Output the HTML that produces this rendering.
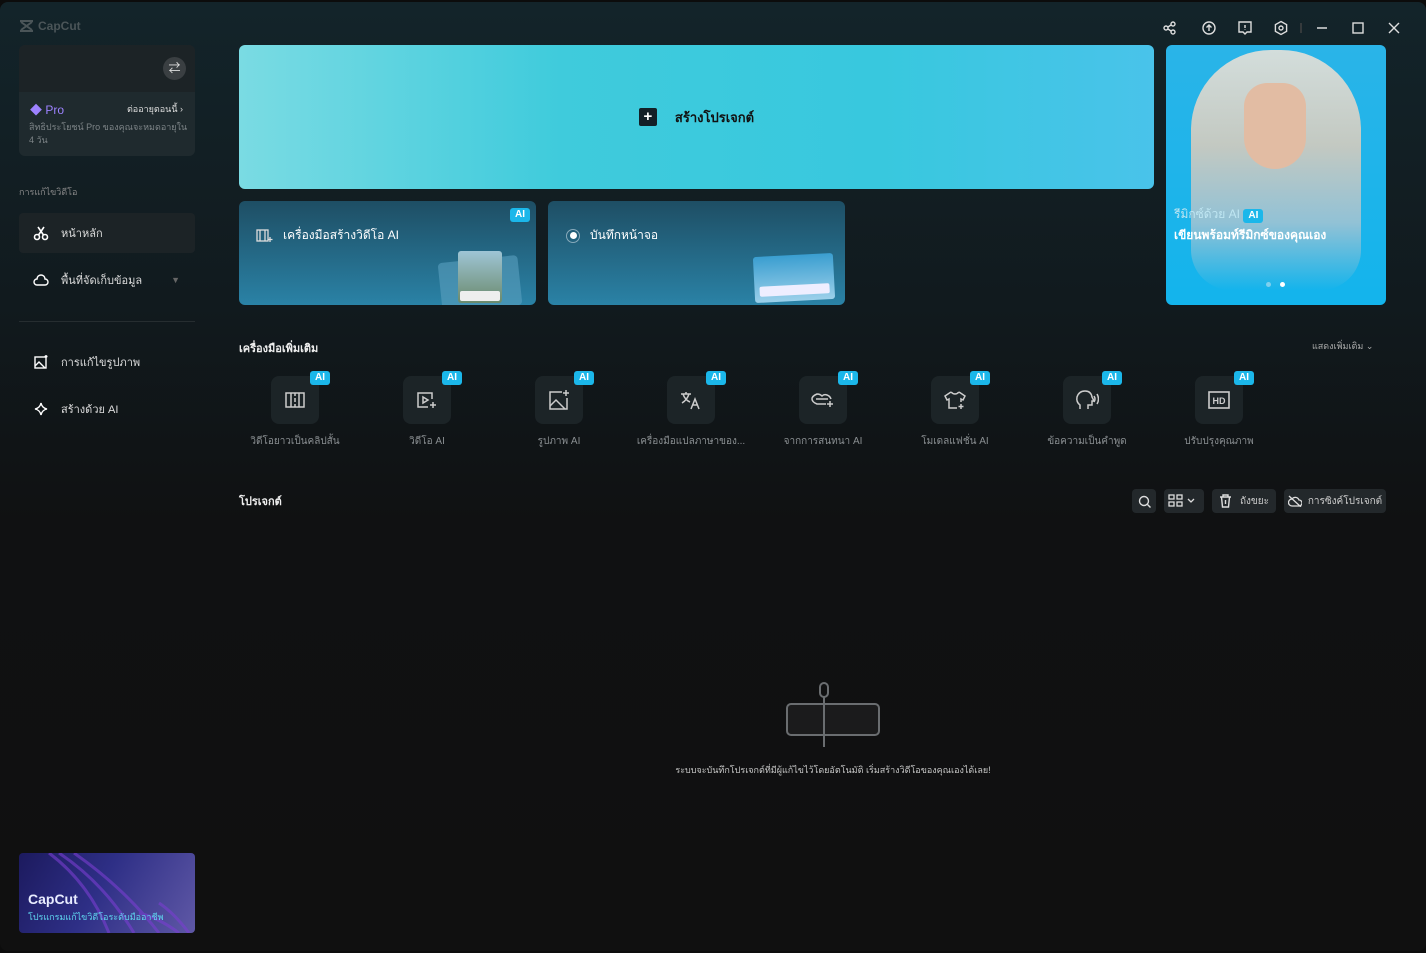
<!DOCTYPE html>
<html><head><meta charset="utf-8"><style>
*{margin:0;padding:0;box-sizing:border-box}
body{width:1426px;height:953px;background:#0c0c0c;font-family:"Liberation Sans","Noto Sans CJK SC",sans-serif;color:#ddd;overflow:hidden;position:relative}
.win{position:absolute;left:0;top:2px;width:1426px;height:949px;border-radius:8px;background:linear-gradient(180deg,#13242a 0px,#111a1e 300px,#101112 520px,#101010 100%);overflow:hidden}
.abs{position:absolute}
.ai{position:absolute;background:#1bb7ea;color:#fff;font-size:10px;font-weight:bold;border-radius:3px;padding:1px 5px;line-height:12px}
.tool{position:absolute;top:374px;width:120px;text-align:center}
.tool .box{width:48px;height:48px;border-radius:8px;background:#1c2427;margin:0 auto;position:relative;display:flex;align-items:center;justify-content:center}
.tool .lbl{font-size:10px;color:#8a8f92;margin-top:10px;white-space:nowrap}
.nav{position:absolute;left:19px;width:176px;height:40px;display:flex;align-items:center;font-size:11px;color:#ddd}
.nav svg{margin:0 12px 0 14px}
.btn{position:absolute;top:487px;height:24px;background:#23282b;border-radius:4px;display:flex;align-items:center;justify-content:center;font-size:10px;color:#ccc}
</style></head><body>
<div class="win">
<div class="abs" style="left:19px;top:17px;display:flex;align-items:center;gap:4px;color:#4b5558;font-size:12px;font-weight:bold">
<svg width="15" height="12" viewBox="0 0 15 12"><path d="M1 1h13M1 11h13M2 2l11 8M13 2L2 10" stroke="#4b5558" stroke-width="2" fill="none"/></svg>CapCut</div>
<svg class="abs" style="left:1160px;top:17px" width="240" height="20" viewBox="0 0 240 20" fill="none" stroke="#ddd" stroke-width="1.4">
<circle cx="6" cy="9" r="2"/><circle cx="13" cy="5" r="2"/><circle cx="13" cy="13" r="2"/><path d="M8 8l3-2M8 10l3 2"/>
<circle cx="49" cy="9" r="6"/><path d="M49 12V6M46.5 8.5L49 6l2.5 2.5"/>
<path d="M79 3h12v10h-4l-2 2-2-2h-4z"/><path d="M85 6v3M85 10.5v.5"/>
<path d="M121 2.5l5.6 3.2v6.6L121 15.5l-5.6-3.2V5.7z"/><circle cx="121" cy="9" r="2"/>
<path d="M141 4v10" stroke="#444"/>
<path d="M157 9h10"/>
<rect x="193" y="4" width="10" height="10"/>
<path d="M229 4l10 10M239 4l-10 10"/>
</svg>
<div class="abs" style="left:19px;top:43px;width:176px;height:111px;border-radius:6px;background:#1f2a2e;overflow:hidden">
<div style="height:47px;background:#1c2326;position:relative"><div style="position:absolute;right:9px;top:12px;width:23px;height:23px;border-radius:50%;background:#3a3f42;color:#ddd;font-size:12px;text-align:center;line-height:22px">⇄</div></div>
<div style="position:absolute;left:11px;top:56px;color:#9d82ff;font-size:12px">◆ Pro</div>
<div style="position:absolute;right:12px;top:57px;color:#ddd;font-size:9px">ต่ออายุตอนนี้ ›</div>
<div style="position:absolute;left:10px;top:76px;width:160px;color:#7d8487;font-size:9px;line-height:13px">สิทธิประโยชน์ Pro ของคุณจะหมดอายุใน 4 วัน</div>
</div>
<div class="abs" style="left:19px;top:183px;font-size:9px;color:#888">การแก้ไขวิดีโอ</div>
<div class="nav" style="top:211px;background:#1c2326;border-radius:4px"><svg width="16" height="16" viewBox="0 0 16 16" fill="none" stroke="#fff" stroke-width="1.6"><circle cx="4" cy="12" r="2.5"/><circle cx="12" cy="12" r="2.5"/><path d="M5.5 10L11 2M10.5 10L5 2"/></svg>หน้าหลัก</div>
<div class="nav" style="top:258px"><svg width="16" height="16" viewBox="0 0 16 16" fill="none" stroke="#fff" stroke-width="1.4"><path d="M4 13h8a3 3 0 000-6 4 4 0 00-8 0 3 3 0 000 6z"/></svg>พื้นที่จัดเก็บข้อมูล<span style="margin-left:auto;margin-right:15px;color:#666;font-size:9px">▼</span></div>
<div class="abs" style="left:19px;top:319px;width:176px;height:1px;background:#262d30"></div>
<div class="nav" style="top:340px"><svg width="16" height="16" viewBox="0 0 16 16" fill="none" stroke="#fff" stroke-width="1.4"><rect x="2" y="3" width="11" height="11"/><path d="M2 12l4-4 6 6M13 1v3M11.5 2.5h3"/></svg>การแก้ไขรูปภาพ</div>
<div class="nav" style="top:387px"><svg width="16" height="16" viewBox="0 0 16 16" fill="none" stroke="#fff" stroke-width="1.4"><path d="M8 2q1 5 6 6-5 1-6 6-1-5-6-6 5-1 6-6z"/></svg>สร้างด้วย AI</div>
<div class="abs" style="left:19px;top:851px;width:176px;height:80px;border-radius:4px;background:linear-gradient(120deg,#1c1a5e 0%,#2e2f86 45%,#5f58a6 100%);overflow:hidden">
<svg width="176" height="80" style="position:absolute;left:0;top:0" fill="none" stroke="#7b3fd0" stroke-width="3" opacity=".6"><path d="M30 0q40 30 60 80M40 0q45 30 75 80M55 0q50 35 85 80M120 60q20 5 40 20M140 50q15 10 30 30"/></svg>
<div style="position:absolute;left:9px;top:38px;color:#e8ecff;font-weight:bold;font-size:14px">CapCut</div>
<div style="position:absolute;left:9px;top:57px;color:#5fd6f0;font-size:9px">โปรแกรมแก้ไขวิดีโอระดับมืออาชีพ</div>
</div>
<div class="abs" style="left:239px;top:43px;width:915px;height:144px;border-radius:6px;background:linear-gradient(90deg,#7adbe3 0%,#3fcbdc 35%,#38c8de 70%,#49c3ea 100%);display:flex;align-items:center;justify-content:center;color:#111;font-size:13px;font-weight:bold">
<span style="display:inline-block;width:18px;height:18px;background:#132027;border-radius:2px;color:#fff;text-align:center;line-height:17px;margin-right:18px;font-size:15px">+</span>สร้างโปรเจกต์</div>
<div class="abs" style="left:239px;top:199px;width:297px;height:104px;border-radius:6px;background:linear-gradient(180deg,#1e4e64,#2a82a6);overflow:hidden">
<div class="ai" style="right:6px;top:7px">AI</div>
<div style="position:absolute;left:17px;top:25px;font-size:12px;color:#fff;display:flex;align-items:center;gap:9px"><svg width="18" height="16" fill="none" stroke="#ddd" stroke-width="1.3"><rect x="1" y="2" width="11" height="11"/><path d="M4 2v11M9 2v11M14 9v5M11.5 11.5h5"/></svg>เครื่องมือสร้างวิดีโอ AI</div>
<div style="position:absolute;left:201px;top:58px;width:80px;height:50px;background:#5aa0c0;opacity:.6;transform:rotate(-6deg);border-radius:4px"></div>
<div style="position:absolute;left:219px;top:50px;width:44px;height:52px;border-radius:3px;background:linear-gradient(180deg,#9fc5d6,#6b8a6c)"><div style="position:absolute;left:2px;bottom:2px;width:40px;height:10px;background:#eee;border-radius:2px"></div></div>
</div>
<div class="abs" style="left:548px;top:199px;width:297px;height:104px;border-radius:6px;background:linear-gradient(180deg,#1e4e64,#2a82a6);overflow:hidden">
<div style="position:absolute;left:18px;top:25px;font-size:12px;color:#fff;display:flex;align-items:center;gap:10px"><span style="width:14px;height:14px;border-radius:50%;border:1.5px solid #8ab;display:inline-flex;align-items:center;justify-content:center"><span style="width:7px;height:7px;border-radius:50%;background:#fff"></span></span>บันทึกหน้าจอ</div>
<div style="position:absolute;left:206px;top:54px;width:80px;height:46px;border-radius:3px;background:linear-gradient(180deg,#3a9ed0,#9cd0ea);transform:rotate(-3deg)"><div style="position:absolute;left:5px;bottom:6px;width:70px;height:10px;background:#eef;border-radius:2px"></div></div>
</div>
<div class="abs" style="left:1166px;top:43px;width:220px;height:260px;border-radius:6px;background:linear-gradient(180deg,#2ab4e8,#13b4ec);overflow:hidden">
<div style="position:absolute;left:25px;top:5px;width:170px;height:240px;border-radius:80px 80px 40px 40px;background:linear-gradient(180deg,#e6e2da 0%,#d5cbbd 40%,#9fc3d3 72%,rgba(40,180,230,0) 100%);opacity:.9"></div>
<div style="position:absolute;left:78px;top:38px;width:62px;height:86px;border-radius:30px 30px 40px 40px;background:#e2bca3"></div>
<div style="position:absolute;left:8px;top:160px;font-size:12px;color:#bfe6f2">รีมิกซ์ด้วย AI <span class="ai" style="position:static;display:inline-block">AI</span></div>
<div style="position:absolute;left:8px;top:181px;font-size:12px;color:#fff;font-weight:bold">เขียนพร้อมท์รีมิกซ์ของคุณเอง</div>
<div style="position:absolute;left:100px;top:237px;width:5px;height:5px;border-radius:50%;background:#7fd0ee"></div>
<div style="position:absolute;left:114px;top:237px;width:5px;height:5px;border-radius:50%;background:#fff"></div>
</div>
<div class="abs" style="left:239px;top:337px;font-size:11px;font-weight:bold;color:#eee">เครื่องมือเพิ่มเติม</div>
<div class="abs" style="left:1312px;top:337px;font-size:9px;color:#aaa">แสดงเพิ่มเติม ⌄</div>
<div class="tool" style="left:235px"><div class="box"><div class="ai" style="right:-11px;top:-5px">AI</div><svg width="20" height="18" fill="none" stroke="#ccc" stroke-width="1.5"><rect x="1" y="2" width="18" height="14"/><path d="M6 2v14M14 2v14M10 2v3M10 7v4M10 13v3"/></svg></div><div class="lbl">วิดีโอยาวเป็นคลิปสั้น</div></div>
<div class="tool" style="left:367px"><div class="box"><div class="ai" style="right:-11px;top:-5px">AI</div><svg width="22" height="18" fill="none" stroke="#ccc" stroke-width="1.5"><path d="M16 8V2H2v14h10"/><path d="M7 6l5 3-5 3z"/><path d="M17 11v6M14 14h6"/></svg></div><div class="lbl">วิดีโอ AI</div></div>
<div class="tool" style="left:499px"><div class="box"><div class="ai" style="right:-11px;top:-5px">AI</div><svg width="22" height="22" fill="none" stroke="#ccc" stroke-width="1.5"><path d="M14 3H2v17h17V9"/><path d="M2 17l6-6 9 9M18 1v6M15 4h6"/></svg></div><div class="lbl">รูปภาพ AI</div></div>
<div class="tool" style="left:631px"><div class="box"><div class="ai" style="right:-11px;top:-5px">AI</div><svg width="22" height="20" fill="none" stroke="#ccc" stroke-width="1.5"><path d="M1 4h10M6 2v2M3 4q2 6 7 8M9 4q-2 6-7 9M11 19l4-10 4 10M12.5 15h5"/></svg></div><div class="lbl">เครื่องมือแปลภาษาของ...</div></div>
<div class="tool" style="left:763px"><div class="box"><div class="ai" style="right:-11px;top:-5px">AI</div><svg width="24" height="18" fill="none" stroke="#ccc" stroke-width="1.5"><path d="M15 13H6Q1 11 1 8t5-5q3 0 5 2 2-2 5-1 3 1 4 4"/><path d="M5 8h12M19 10v6M16 13h6"/></svg></div><div class="lbl">จากการสนทนา AI</div></div>
<div class="tool" style="left:895px"><div class="box"><div class="ai" style="right:-11px;top:-5px">AI</div><svg width="22" height="20" fill="none" stroke="#ccc" stroke-width="1.5"><path d="M7 2L1 6l2 4 2-1v9h8M15 2l6 4-2 4-2-1v3M7 2q4 4 8 0M17 14v5M14.5 16.5h5"/></svg></div><div class="lbl">โมเดลแฟชั่น AI</div></div>
<div class="tool" style="left:1027px"><div class="box"><div class="ai" style="right:-11px;top:-5px">AI</div><svg width="24" height="22" fill="none" stroke="#ccc" stroke-width="1.5"><path d="M5 20v-4Q1 13 2 8q2-6 8-6 6 0 7 6l2 4h-2v4h-4v4"/><path d="M19 7q2 3 0 6M22 5q3 5 0 10"/></svg></div><div class="lbl">ข้อความเป็นคำพูด</div></div>
<div class="tool" style="left:1159px"><div class="box"><div class="ai" style="right:-11px;top:-5px">AI</div><svg width="22" height="18" fill="none" stroke="#ccc" stroke-width="1.6"><rect x="1" y="1" width="20" height="16"/><text x="11" y="13" text-anchor="middle" font-size="9" font-weight="bold" fill="#ccc" stroke="none" font-family="Liberation Sans">HD</text></svg></div><div class="lbl">ปรับปรุงคุณภาพ</div></div>
<div class="abs" style="left:239px;top:490px;font-size:11px;font-weight:bold;color:#eee">โปรเจกต์</div>
<div class="btn" style="left:1132px;width:24px"><svg width="13" height="13" fill="none" stroke="#ddd" stroke-width="1.4"><circle cx="6" cy="6" r="4.5"/><path d="M9.5 9.5l3 3"/></svg></div>
<div class="btn" style="left:1164px;width:40px;justify-content:flex-start;padding-left:4px"><svg width="30" height="14" fill="none" stroke="#ddd" stroke-width="1.3"><rect x="1" y="1" width="5" height="4"/><rect x="9" y="1" width="5" height="4"/><rect x="1" y="8" width="5" height="4"/><rect x="9" y="8" width="5" height="4"/><path d="M20 5l3 3 3-3"/></svg></div>
<div class="btn" style="left:1212px;width:64px"><svg width="13" height="14" fill="none" stroke="#ddd" stroke-width="1.4" style="margin-right:8px"><path d="M1 3h11M4 3V1h5v2M2.5 3l1 10h6l1-10M6.5 6v4"/></svg>ถังขยะ</div>
<div class="btn" style="left:1284px;width:102px"><svg width="14" height="12" fill="none" stroke="#ddd" stroke-width="1.3" style="margin-right:6px"><path d="M4 11h7a3 3 0 000-6 4 4 0 00-7-1 3.5 3.5 0 000 7zM1 1l12 11"/></svg>การซิงค์โปรเจกต์</div>
<svg class="abs" style="left:785px;top:679px" width="100" height="66" fill="none" stroke="#6a6d70" stroke-width="2"><rect x="2" y="23" width="92" height="31" rx="4" fill="#1b1b1c"/><rect x="35" y="2" width="8" height="14" rx="4"/><path d="M39 16v50"/></svg>
<div class="abs" style="left:0;width:1666px;top:761px;text-align:center;font-size:9px;color:#c8c8c8">ระบบจะบันทึกโปรเจกต์ที่มีผู้แก้ไขไว้โดยอัตโนมัติ เริ่มสร้างวิดีโอของคุณเองได้เลย!</div>
</div>
</body></html>
